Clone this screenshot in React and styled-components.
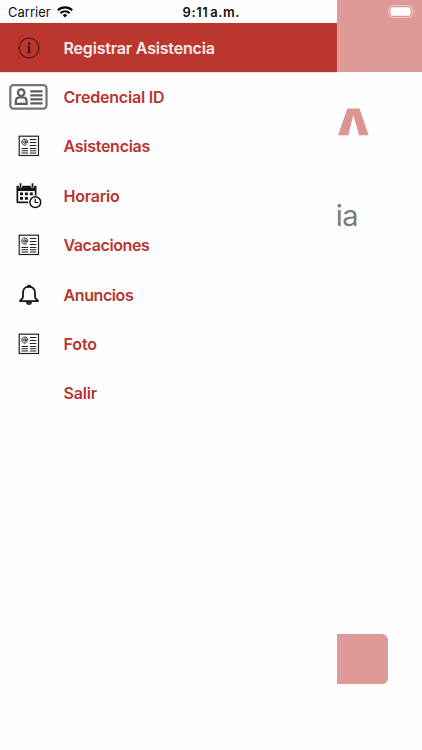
import React from 'react';
import styled, { createGlobalStyle } from 'styled-components';

const Global = createGlobalStyle`
  * { box-sizing: border-box; }
  body { margin: 0; background: #fefefe; font-family: Inter, "Liberation Sans", sans-serif; }
`;

const Screen = styled.div`
  display: grid;
  grid-template-columns: 337px 1fr;
  height: 750px;
  overflow: hidden;
  background: #fefefe;
`;

const Drawer = styled.nav`
  display: flex;
  flex-direction: column;
  min-width: 0;
`;

const StatusBar = styled.div`
  display: flex;
  align-items: center;
  height: 23px;
  padding: 1px 0 0 8px;
  font-size: 13px;
  line-height: 22px;
  color: #111;
  white-space: nowrap;
`;

const Carrier = styled.span`
  width: 49px;
`;

const Time = styled.span`
  margin-left: 109.5px;
  font-weight: 600;
  word-spacing: -2px;
  letter-spacing: 0.6px;
`;

const MenuItem = styled.a`
  display: grid;
  grid-template-columns: 57px 1fr;
  align-items: center;
  height: 49.4px;
  padding-right: 16px;
  background: ${(p) => (p.$active ? '#bc3630' : 'transparent')};
  color: ${(p) => (p.$active ? '#fbeceb' : '#b8342f')};
  box-shadow: ${(p) => (p.$active ? '0 1px 0 #f6dedd' : 'none')};
`;

const IconSlot = styled.span`
  display: flex;
  align-items: center;
  justify-content: center;
  height: 30px;
  svg { display: block; }
`;

const Label = styled.span`
  padding-left: 6.5px;
  font-size: 16px;
  font-weight: 600;
  line-height: 20px;
  letter-spacing: ${(p) => p.$spacing || 0}px;
  white-space: nowrap;
`;

const Page = styled.main`
  display: flex;
  flex-direction: column;
  min-width: 0;
`;

const PageHeader = styled.header`
  display: flex;
  justify-content: flex-end;
  height: 72px;
  padding: 5px 6px 0 0;
  background: #de9a97;
`;

const Logo = styled.div`
  height: 28px;
  margin-top: 36px;
  svg { display: block; }
`;

const Heading = styled.h1`
  margin: 60px 0 0 -2px;
  padding-left: 0.8px;
  height: 40px;
  font-size: 29px;
  line-height: 40px;
  font-weight: 400;
  letter-spacing: -0.5px;
  color: #7b7b7b;
`;

const PageButton = styled.button`
  width: 51px;
  height: 50px;
  margin: auto 0 66px;
  padding: 0;
  border: 0;
  border-radius: 0 6px 6px 0;
  background: #de9a97;
`;

const InfoIcon = () => (
  <svg width="22" height="22" viewBox="0 0 22 22">
    <circle cx="11" cy="11" r="10" fill="none" stroke="#300806" strokeWidth="1" />
    <circle cx="11.1" cy="6.8" r="1.2" fill="#220503" />
    <path d="M9.2 9.3h2.8v6h1.2v.8H9v-.8h1.3v-5.2H9.2z" fill="#220503" />
  </svg>
);

const CardIcon = () => (
  <svg width="39" height="26" viewBox="0 0 39 26">
    <rect x="1.3" y="1.2" width="36.2" height="23.4" rx="3" fill="none" stroke="#777" strokeWidth="2.3" />
    <g fill="none" stroke="#5c5c5c" strokeWidth="2.2">
      <circle cx="12.2" cy="8.6" r="3.3" />
      <path d="M6.8 19.800v-2.600c0-2.200 1.400-3.700 3.300-3.700h4.200c1.900 0 3.300 1.500 3.300 3.700v2.600z" />
      <path d="M21.300 7.300h12.200M21.300 11.300h12.200M21.300 15.300h12.200M21.300 19.300h12.200" />
    </g>
  </svg>
);

const NewsIcon = () => (
  <svg width="22" height="22" viewBox="0 0 22 22" fill="none" stroke="#222">
    <rect x="1.200" y="1.200" width="19.300" height="19.300" strokeWidth="1.200" />
    <path d="M11.800 4.500h6.500M11.800 7.500h6.500M11.800 10.500h6.500M11.800 13.500h6.500M11.800 15.800h6.500M11.800 18h6.500M3.500 13.500h6.500M3.500 15.800h6.500M3.500 18h6.500" strokeWidth="1.100" />
    <circle cx="6.8" cy="7.1" r="1.2" strokeWidth="1" />
    <path d="M8 5.8v1.8c.2 1 1.7.7 1.7-.7 0-1.6-1.2-2.8-2.9-2.8s-3 1.3-3 3 1.3 3 3 3c.8 0 1.3-.2 1.8-.5" strokeWidth="1" />
  </svg>
);

const CalendarIcon = () => (
  <svg width="28" height="26" viewBox="0 0 28 26">
    <path d="M1.500 2.800h20V15h-1.700V8H3.200v10.600h10v1.700H2.700a1.200 1.200 0 0 1-1.200-1.200z" fill="#151515" />
    <path d="M5.500.5v4M17.500.5v4" stroke="#fefefe" strokeWidth="3.400" />
    <path d="M5.500.3v4M17.500.3v4" stroke="#151515" strokeWidth="1.700" />
    <path d="M5 9.500h3v2.800H5zM9.900 9.500h3v2.800h-3zM14.800 9.500h3v2.800h-3zM5 14h3v2.800H5zM9.900 14h3v2.800h-3z" fill="#151515" />
    <circle cx="20.300" cy="19.200" r="6.800" fill="#fefefe" />
    <circle cx="20.300" cy="19.200" r="5.400" fill="#fefefe" stroke="#151515" strokeWidth="1.500" />
    <path d="M20.200 15.800v3.700h3.200" fill="none" stroke="#151515" strokeWidth="1.200" />
  </svg>
);

const BellIcon = () => (
  <svg width="20" height="22" viewBox="0 0 20 22">
    <path d="M10 2.600c-3.800 0-6 2.800-6 6.200v4.100c0 1.700-2.900 3.200-2.900 4.300h17.800c0-1.100-2.900-2.600-2.900-4.300V8.800c0-3.400-2.200-6.200-6-6.200z" fill="none" stroke="#151515" strokeWidth="1.800" strokeLinejoin="round" />
    <path d="M8 3a2 2 0 0 1 4 0z" fill="#151515" stroke="#151515" strokeWidth=".8" />
    <path d="M7.700 18h4.600a2.300 2.300 0 0 1-4.600 0z" fill="#555" stroke="#151515" strokeWidth="1.100" />
  </svg>
);

const WifiIcon = () => (
  <svg width="16" height="12" viewBox="0 0 16 12" fill="none" stroke="#080808" strokeWidth="2.200">
    <path d="M.8 4.300a10.300 10.300 0 0 1 14.400 0M3.400 7.100a6.600 6.600 0 0 1 9.200 0" />
    <path d="M8 11.500 5.700 9.200a3.300 3.300 0 0 1 4.600 0z" fill="#080808" stroke="none" />
  </svg>
);

const BatteryIcon = () => (
  <svg width="28" height="14" viewBox="0 0 28 14">
    <rect x=".8" y=".5" width="23.400" height="12" rx="3.500" fill="none" stroke="#efcac8" />
    <rect x="2.500" y="2.200" width="20" height="8.600" rx="2" fill="#fff" />
    <path d="M25.600 4.500c1.600.6 1.600 3.400 0 4z" fill="#efcac8" />
  </svg>
);

const items = [
  { label: 'Registrar Asistencia', Icon: InfoIcon, active: true, spacing: -0.18 },
  { label: 'Credencial ID', Icon: CardIcon, spacing: -0.2 },
  { label: 'Asistencias', Icon: NewsIcon, spacing: -0.27 },
  { label: 'Horario', Icon: CalendarIcon, spacing: -0.2 },
  { label: 'Vacaciones', Icon: NewsIcon, spacing: -0.4 },
  { label: 'Anuncios', Icon: BellIcon, spacing: -0.4 },
  { label: 'Foto', Icon: NewsIcon, spacing: -0.1 },
  { label: 'Salir', spacing: -0.15 },
];

export default function App() {
  return (
    <>
      <Global />
      <Screen>
        <Drawer>
          <StatusBar>
            <Carrier>Carrier</Carrier>
            <WifiIcon />
            <Time>9:11 a.m.</Time>
          </StatusBar>
          {items.map(({ label, Icon, active, spacing }) => (
            <MenuItem key={label} $active={active}>
              <IconSlot>{Icon && <Icon />}</IconSlot>
              <Label $spacing={spacing}>{label}</Label>
            </MenuItem>
          ))}
        </Drawer>
        <Page>
          <PageHeader>
            <BatteryIcon />
          </PageHeader>
          <Logo>
            <svg width="34" height="28" viewBox="0 0 34 28">
              <path d="M1 27.200 10.300.5h12.200l9.200 26.700H22L16.300 7 11.300 27.200z" fill="#dc9692" />
            </svg>
          </Logo>
          <Heading>ia</Heading>
          <PageButton aria-label="Registrar" />
        </Page>
      </Screen>
    </>
  );
}
